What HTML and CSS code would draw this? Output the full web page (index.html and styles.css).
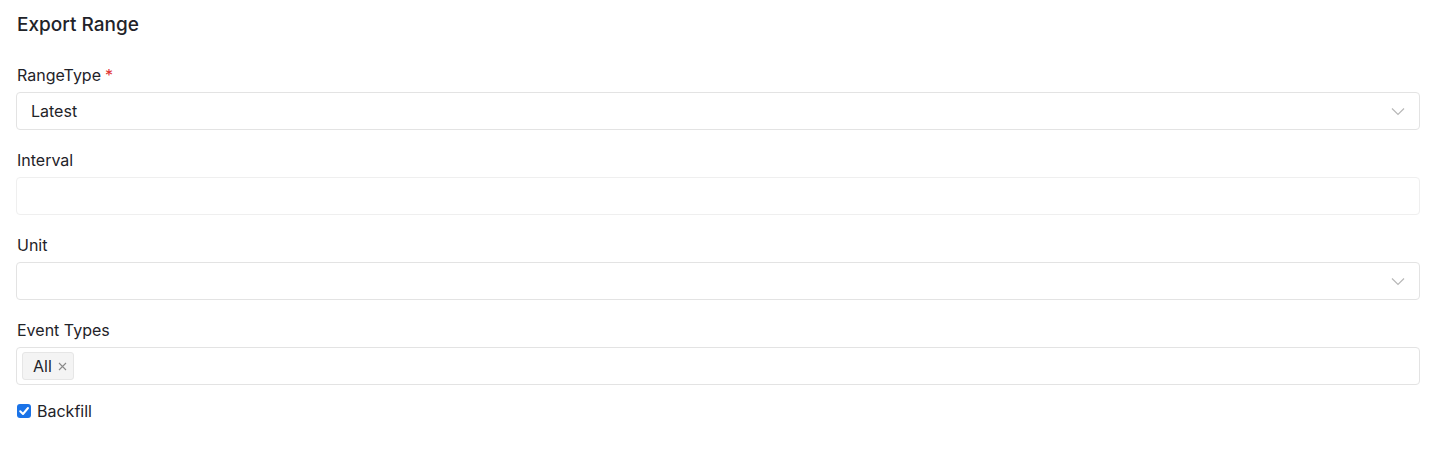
FILE: index.html
```html
<!DOCTYPE html>
<html>
<head>
<meta charset="utf-8">
<link rel="stylesheet" href="styles.css">
</head>
<body>
<div class="form">
  <h2 class="title">Export Range</h2>
  <div class="field">
    <label class="label">RangeType<span class="req">*</span></label>
    <div class="control select">
      <span class="value">Latest</span>
      <svg class="chev" width="14" height="9" viewBox="0 0 14 9"><path d="M1 1.5 L7 7.5 L13 1.5" fill="none" stroke="#b8b8b8" stroke-width="1.2"/></svg>
    </div>
  </div>
  <div class="field">
    <label class="label">Interval</label>
    <div class="control input"></div>
  </div>
  <div class="field">
    <label class="label">Unit</label>
    <div class="control select">
      <span class="value"></span>
      <svg class="chev" width="14" height="9" viewBox="0 0 14 9"><path d="M1 1.5 L7 7.5 L13 1.5" fill="none" stroke="#b8b8b8" stroke-width="1.2"/></svg>
    </div>
  </div>
  <div class="field">
    <label class="label">Event Types</label>
    <div class="control multi">
      <span class="tag">All<svg class="x" width="9" height="9" viewBox="0 0 9 9"><path d="M1 1 L8 8 M8 1 L1 8" stroke="#8a8a8a" stroke-width="1.1"/></svg></span>
    </div>
  </div>
  <label class="check"><span class="box"><svg width="14" height="14" viewBox="0 0 14 14"><path d="M3.2 7.2 L6 10 L11 4" fill="none" stroke="#fff" stroke-width="2" stroke-linecap="round" stroke-linejoin="round"/></svg></span>Backfill</label>
</div>
</body>
</html>
```

FILE: styles.css
```css
html, body {
  margin: 0;
  padding: 0;
  background: #fff;
}
body {
  font-family: Inter, "Noto Sans", sans-serif;
  color: #1f2329;
}
.form {
  padding: 13px 18px 0 16px;
  display: flex;
  flex-direction: column;
}
.title {
  margin: 0 0 26px 1px;
  font-size: 19px;
  font-weight: 500;
  line-height: 24px;
}
.field {
  display: flex;
  flex-direction: column;
  margin-bottom: 18px;
}
.label {
  font-size: 16px;
  line-height: 24px;
  margin-bottom: 5px;
  margin-left: 1px;
}
.req {
  color: #e03030;
  margin-left: 4px;
}
.control {
  box-sizing: border-box;
  height: 38px;
  border: 1px solid #e3e3e3;
  border-radius: 4px;
  display: flex;
  align-items: center;
  padding: 0 14px 0 14px;
  font-size: 16px;
}
.input {
  border-color: #efefef;
}
.select .value {
  flex: 1;
}
.chev {
  display: block;
  margin-top: 1px;
}
.multi {
  padding: 0 5px;
}
.tag {
  display: flex;
  align-items: center;
  height: 28px;
  box-sizing: border-box;
  background: #f4f4f4;
  border: 1px solid #e6e6e6;
  border-radius: 3px;
  padding: 0 6px 0 10px;
  font-size: 16px;
}
.tag .x {
  margin-left: 6px;
  margin-top: 1px;
}
.check {
  display: flex;
  align-items: center;
  font-size: 16px;
  line-height: 24px;
  margin-top: -4px;
}
.box {
  width: 14px;
  height: 14px;
  border-radius: 3px;
  background: #1a73e8;
  margin: 0 6px 0 1px;
  display: flex;
}
```
